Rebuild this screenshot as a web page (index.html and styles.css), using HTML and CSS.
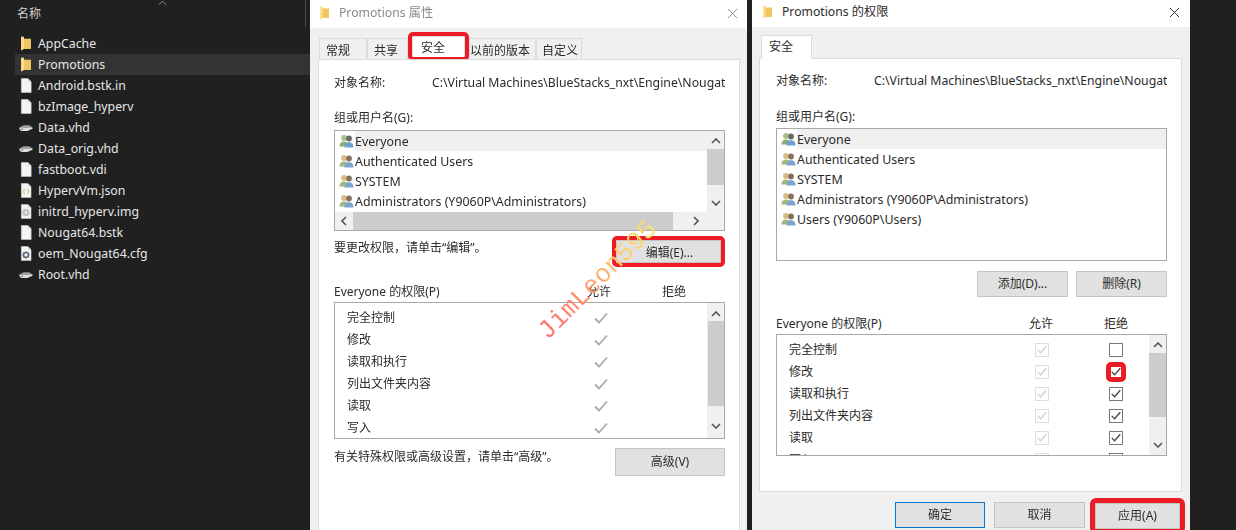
FILE: index.html
```html
<!DOCTYPE html>
<html lang="zh">
<head>
<meta charset="utf-8">
<title>Promotions 权限</title>
<link rel="stylesheet" href="styles.css">
</head>
<body>
<svg class="defs" width="0" height="0" aria-hidden="true">
  <symbol id="folder" viewBox="0 0 11 14">
    <path d="M1 .8h2.200L4 2.500h6v9.500H3.200L1 13.600z" fill="#f6cf6b"/>
    <path d="M1 .8h2.200L3.600 2.500v9.700L1 13.600z" fill="#fbe08e"/>
    <path d="M3.600 2.800H10v9.200H3.600z" fill="#f0c662"/>
  </symbol>
  <symbol id="file" viewBox="0 0 12 16">
    <path d="M1 .5h7l3.5 3.5v11.500H1z" fill="#f4f4f4" stroke="#cfcfcf" stroke-width=".6"/>
    <path d="M8 .5V4h3.500z" fill="#d8d8d8"/>
  </symbol>
  <symbol id="json" viewBox="0 0 12 16">
    <use href="#file"/>
    <path d="M4.700 6.200c-1.200 0-.8 1.400-.8 2.300 0 .4-.3.5-.6.5.3 0 .6.100.6.500 0 .9-.4 2.300.8 2.300M7.300 6.200c1.200 0 .8 1.400.8 2.300 0 .4.300.5.600.5-.3 0-.6.100-.6.500 0 .9.400 2.300-.8 2.300" fill="none" stroke="#c2b24c" stroke-width=".8"/>
  </symbol>
  <symbol id="disc" viewBox="0 0 12 16">
    <use href="#file"/>
    <circle cx="6" cy="9" r="4" fill="#c4c4c4"/>
    <circle cx="6" cy="9" r="1.200" fill="#eee"/>
  </symbol>
  <symbol id="gear" viewBox="0 0 12 16">
    <use href="#file"/>
    <circle cx="6" cy="9.500" r="2.600" fill="none" stroke="#5d6f80" stroke-width="1.700"/>
    <path d="M6 5.500v1.400M6 12v1.500M2 9.500h1.400M8.600 9.500H10M3.200 6.700l1 1M7.800 11.300l1 1M8.800 6.700l-1 1M4.200 11.300l-1 1" stroke="#5d6f80" stroke-width="1"/>
  </symbol>
  <symbol id="disk" viewBox="0 0 15 9">
    <path d="M.5 4.500 5 2.200h6L14.500 4.500 9 7H2z" fill="#9e9e9e"/>
    <path d="M.5 4.700 9 5l5.500-.5v1.400L9 8.300H2.500L.5 6.700z" fill="#dedede"/>
    <path d="M2 5.700h2.500v1H2z" fill="#666"/>
  </symbol>
  <symbol id="users" viewBox="0 0 15 14">
    <circle cx="5" cy="4" r="2.900" fill="#a9bf8c"/>
    <path d="M.5 12.500c0-3.500 1.800-5 4.500-5s4.500 1.500 4.500 5z" fill="#8eab73"/>
    <circle cx="10" cy="4.500" r="2.900" fill="#6b6a62"/>
    <path d="M5.500 13.500c0-3.800 1.900-5.300 4.500-5.300s4.500 1.500 4.500 5.300z" fill="#6fa0d2"/>
  </symbol>
  <symbol id="usersg" viewBox="0 0 15 14">
    <circle cx="5" cy="4" r="2.900" fill="#d8bd84"/>
    <path d="M.5 12.500c0-3.500 1.800-5 4.500-5s4.500 1.500 4.500 5z" fill="#9cb87d"/>
    <circle cx="10" cy="4.500" r="2.900" fill="#84705c"/>
    <path d="M5.500 13.500c0-3.800 1.900-5.300 4.500-5.300s4.500 1.500 4.500 5.300z" fill="#79a5d3"/>
  </symbol>
  <symbol id="up" viewBox="0 0 10 6"><path d="M1 5l4-4 4 4" fill="none" stroke="#555" stroke-width="1.600"/></symbol>
  <symbol id="down" viewBox="0 0 10 6"><path d="M1 1l4 4 4-4" fill="none" stroke="#555" stroke-width="1.600"/></symbol>
  <symbol id="left" viewBox="0 0 6 10"><path d="M5 1L1 5l4 4" fill="none" stroke="#555" stroke-width="1.600"/></symbol>
  <symbol id="right" viewBox="0 0 6 10"><path d="M1 1l4 4-4 4" fill="none" stroke="#555" stroke-width="1.600"/></symbol>
  <symbol id="tick" viewBox="0 0 14 12"><path d="M1 6.500l4 4L13 1.500" fill="none" stroke="currentColor" stroke-width="1.800"/></symbol>
  <symbol id="close" viewBox="0 0 12 12"><path d="M1 1l10 10M11 1L1 11" fill="none" stroke="currentColor" stroke-width="1"/></symbol>
</svg>

<section class="explorer">
  <header class="ex-head">
    <span>名称</span>
    <svg class="caret" viewBox="0 0 10 6"><path d="M1 5l4-4 4 4" fill="none" stroke="#9a9a9a" stroke-width="1"/></svg>
  </header>
  <ul class="ex-list">
    <li class="ex-row"><svg class="ex-ico"><use href="#folder"/></svg>AppCache</li>
    <li class="ex-row ex-sel"><svg class="ex-ico"><use href="#folder"/></svg>Promotions</li>
    <li class="ex-row"><svg class="ex-ico"><use href="#file"/></svg>Android.bstk.in</li>
    <li class="ex-row"><svg class="ex-ico"><use href="#file"/></svg>bzImage_hyperv</li>
    <li class="ex-row"><svg class="ex-ico"><use href="#disk"/></svg>Data.vhd</li>
    <li class="ex-row"><svg class="ex-ico"><use href="#disk"/></svg>Data_orig.vhd</li>
    <li class="ex-row"><svg class="ex-ico"><use href="#file"/></svg>fastboot.vdi</li>
    <li class="ex-row"><svg class="ex-ico"><use href="#json"/></svg>HypervVm.json</li>
    <li class="ex-row"><svg class="ex-ico"><use href="#disc"/></svg>initrd_hyperv.img</li>
    <li class="ex-row"><svg class="ex-ico"><use href="#file"/></svg>Nougat64.bstk</li>
    <li class="ex-row"><svg class="ex-ico"><use href="#gear"/></svg>oem_Nougat64.cfg</li>
    <li class="ex-row"><svg class="ex-ico"><use href="#disk"/></svg>Root.vhd</li>
  </ul>
</section>

<section class="dialog d1">
  <header class="title inactive">
    <svg class="t-ico"><use href="#folder"/></svg>
    <span class="t-text">Promotions 属性</span>
    <svg class="t-close"><use href="#close"/></svg>
  </header>
  <nav class="tabs">
    <span class="tab t-a">常规</span>
    <span class="tab t-b">共享</span>
    <span class="tab tab-on red">安全</span>
    <span class="tab t-c">以前的版本</span>
    <span class="tab t-d">自定义</span>
  </nav>
  <div class="panel">
    <div class="objrow"><span class="objlabel">对象名称:</span><span class="objpath">C:\Virtual Machines\BlueStacks_nxt\Engine\Nougat</span></div>
    <div class="label lab-g">组或用户名(G):</div>
    <div class="box groups g1">
      <div class="g-main">
        <ul class="g-rows">
          <li class="g-row g-sel"><svg class="u-ico"><use href="#users"/></svg><span class="g-name">Everyone</span></li>
          <li class="g-row"><svg class="u-ico"><use href="#usersg"/></svg><span class="g-name">Authenticated Users</span></li>
          <li class="g-row"><svg class="u-ico"><use href="#usersg"/></svg><span class="g-name">SYSTEM</span></li>
          <li class="g-row"><svg class="u-ico"><use href="#usersg"/></svg><span class="g-name">Administrators (Y9060P\Administrators)</span></li>
        </ul>
        <div class="vbar vb-g">
          <svg class="arrow"><use href="#up"/></svg>
          <div class="thumb"></div>
          <svg class="arrow"><use href="#down"/></svg>
        </div>
      </div>
      <div class="hbar">
        <svg class="arrow-h"><use href="#left"/></svg>
        <div class="hthumb"></div>
        <svg class="arrow-h"><use href="#right"/></svg>
      </div>
    </div>
    <div class="editrow">
      <span>要更改权限，请单击“编辑”。</span>
      <span class="btn btn-edit red">编辑(E)...</span>
    </div>
    <div class="permhead ph1"><span>Everyone 的权限(P)</span><span>允许</span><span></span><span>拒绝</span></div>
    <div class="box perms p1">
      <ul class="p-rows">
        <li class="p-row"><span>完全控制</span><svg class="tick"><use href="#tick"/></svg></li>
        <li class="p-row"><span>修改</span><svg class="tick"><use href="#tick"/></svg></li>
        <li class="p-row"><span>读取和执行</span><svg class="tick"><use href="#tick"/></svg></li>
        <li class="p-row"><span>列出文件夹内容</span><svg class="tick"><use href="#tick"/></svg></li>
        <li class="p-row"><span>读取</span><svg class="tick"><use href="#tick"/></svg></li>
        <li class="p-row"><span>写入</span><svg class="tick"><use href="#tick"/></svg></li>
      </ul>
      <div class="vbar vb-p1">
        <svg class="arrow"><use href="#up"/></svg>
        <div class="thumb"></div>
        <svg class="arrow"><use href="#down"/></svg>
      </div>
    </div>
    <div class="advrow">
      <span>有关特殊权限或高级设置，请单击“高级”。</span>
      <span class="btn btn-adv">高级(V)</span>
    </div>
  </div>
</section>

<section class="dialog d2">
  <header class="title">
    <svg class="t-ico"><use href="#folder"/></svg>
    <span class="t-text">Promotions 的权限</span>
    <svg class="t-close"><use href="#close"/></svg>
  </header>
  <nav class="tabs">
    <span class="tab tab-solo">安全</span>
  </nav>
  <div class="panel panel2">
    <div class="objrow"><span class="objlabel">对象名称:</span><span class="objpath">C:\Virtual Machines\BlueStacks_nxt\Engine\Nougat</span></div>
    <div class="label lab-g">组或用户名(G):</div>
    <div class="box groups g2">
      <ul class="g-rows">
        <li class="g-row g-sel"><svg class="u-ico"><use href="#users"/></svg><span class="g-name">Everyone</span></li>
        <li class="g-row"><svg class="u-ico"><use href="#usersg"/></svg><span class="g-name">Authenticated Users</span></li>
        <li class="g-row"><svg class="u-ico"><use href="#usersg"/></svg><span class="g-name">SYSTEM</span></li>
        <li class="g-row"><svg class="u-ico"><use href="#usersg"/></svg><span class="g-name">Administrators (Y9060P\Administrators)</span></li>
        <li class="g-row"><svg class="u-ico"><use href="#usersg"/></svg><span class="g-name">Users (Y9060P\Users)</span></li>
      </ul>
    </div>
    <div class="addrow">
      <span class="btn btn-wide">添加(D)...</span>
      <span class="btn btn-wide">删除(R)</span>
    </div>
    <div class="permhead ph2"><span>Everyone 的权限(P)</span><span>允许</span><span></span><span>拒绝</span></div>
    <div class="box perms p2">
      <ul class="p-rows">
        <li class="p-row"><span>完全控制</span><span class="cb cb-off"><svg class="cb-t"><use href="#tick"/></svg></span><span class="cb cb-deny"></span></li>
        <li class="p-row"><span>修改</span><span class="cb cb-off"><svg class="cb-t"><use href="#tick"/></svg></span><span class="cb cb-deny cb-red"><svg class="cb-t"><use href="#tick"/></svg></span></li>
        <li class="p-row"><span>读取和执行</span><span class="cb cb-off"><svg class="cb-t"><use href="#tick"/></svg></span><span class="cb cb-deny"><svg class="cb-t"><use href="#tick"/></svg></span></li>
        <li class="p-row"><span>列出文件夹内容</span><span class="cb cb-off"><svg class="cb-t"><use href="#tick"/></svg></span><span class="cb cb-deny"><svg class="cb-t"><use href="#tick"/></svg></span></li>
        <li class="p-row"><span>读取</span><span class="cb cb-off"><svg class="cb-t"><use href="#tick"/></svg></span><span class="cb cb-deny"><svg class="cb-t"><use href="#tick"/></svg></span></li>
        <li class="p-row"><span>写入</span><span class="cb cb-off"><svg class="cb-t"><use href="#tick"/></svg></span><span class="cb cb-deny"><svg class="cb-t"><use href="#tick"/></svg></span></li>
      </ul>
      <div class="vbar vb-p2">
        <svg class="arrow"><use href="#up"/></svg>
        <div class="thumb"></div>
        <svg class="arrow"><use href="#down"/></svg>
      </div>
    </div>
  </div>
  <footer class="actions">
    <span class="btn btn-act btn-default">确定</span>
    <span class="btn btn-act">取消</span>
    <span class="btn btn-act btn-apply red">应用(A)</span>
  </footer>
</section>

<div class="watermark">JimLeon595</div>
</body>
</html>
```
FILE: styles.css
```css
* { box-sizing: border-box; }
html, body { margin: 0; padding: 0; }
body {
  width: 1236px;
  height: 530px;
  overflow: hidden;
  position: relative;
  display: flex;
  align-items: flex-start;
  background: #202020;
  font-family: "Noto Sans", "Noto Sans CJK SC", sans-serif;
  font-size: 12px;
  line-height: 20px;
  color: #2b2b2b;
}
ul { list-style: none; margin: 0; padding: 0; }
.defs { position: absolute; }

/* explorer */
.explorer { width: 310px; flex: none; color: #e6e6e6; font-size: 12.300px; }
.ex-head {
  width: 306px;
  height: 27px;
  display: flex;
  padding-left: 17px;
  border-right: 1px solid #4a4a4a;
  font-size: 12px;
  color: #d0d0d0;
  line-height: 27px;
}
.caret { width: 9px; height: 6px; margin: 0 0 0 117px; }
.ex-list { padding: 6px 0 0 15px; }
.ex-row { height: 21px; display: flex; align-items: center; padding-left: 4px; }
.ex-sel { background: #333333; }
.ex-ico { width: 14px; height: 15px; margin-right: 5px; flex: none; }

/* dialogs */
.dialog { height: 530px; flex: none; background: #f0f0f0; display: flex; flex-direction: column; filter: blur(.3px); }
.d1 { width: 437px; }
.d2 { width: 438px; margin-left: 5px; }
.title {
  height: 28px;
  background: #fff;
  display: flex;
  align-items: center;
  padding: 0 9px 2px 9px;
  flex: none;
}
.d2 .title { height: 27px; padding: 0 10px 3px; }
.inactive { color: #8a8a8a; }
.t-ico { width: 11px; height: 14px; flex: none; margin-right: 9px; }
.t-text { flex: 1; font-size: 12.200px; }
.t-close { width: 11px; height: 11px; color: #8a8a8a; }
.d2 .t-close { color: #222; }

.tabs { height: 31px; display: flex; align-items: flex-end; padding-left: 9px; flex: none; }
.tab {
  height: 21px;
  background: #f0f0f0;
  border: 1px solid #dcdcdc;
  border-bottom: 0;
  line-height: 23px;
  flex: none;
}
.t-a { width: 48px; padding-left: 6px; }
.t-b { width: 41px; padding-left: 6px; }
.t-c { width: 67px; padding-left: 0; }
.t-d { width: 46px; padding-left: 5px; }
.tab-on { width: 53px; margin: 0 4px; align-self: flex-start; margin-top: 8px; background: #fff; padding-left: 8px; line-height: 21px; }
.tab-solo { width: 51px; height: 24px; background: #fff; padding-left: 7px; margin-bottom: -1px; position: relative; line-height: 21px; }

.red { outline: 4px solid #ed1c24; outline-offset: 0; border-radius: 1px; }

.panel {
  width: 422px;
  flex: 1;
  margin-left: 8px;
  background: #fff;
  border: 1px solid #dcdcdc;
  border-bottom: 0;
  padding: 13px 14px 0 15px;
}
.panel2 {
  width: 423px;
  height: 434px;
  flex: none;
  margin-left: 7px;
  border-bottom: 1px solid #dcdcdc;
  padding-left: 16px;
  padding-top: 12px;
}
.objrow { display: flex; height: 20px; }
.objlabel { width: 98px; flex: none; }
.objpath { white-space: nowrap; overflow: hidden; width: 293px; font-size: 12.250px; }
.label { height: 20px; }
.lab-g { margin-top: 15px; }
.panel2 .lab-g { margin-top: 16px; }

.box { border: 1px solid #a8a8a8; background: #fff; width: 391px; }
.groups { margin-top: 2px; }
.g1 { height: 101px; }
.g2 { height: 133px; margin-top: 1px; }
.g-main { display: flex; height: 81px; }
.g-rows { flex: 1; }
.g-row { display: flex; height: 20px; align-items: center; padding-left: 4px; font-size: 12.400px; }
.u-ico { width: 15px; height: 14px; flex: none; margin-right: 1px; }
.g-name { flex: 1; line-height: 19px; padding-top: 1px; }
.g-sel .g-name { background: #f0f0f0; }

.vbar { width: 17px; flex: none; background: #f0f0f0; display: flex; flex-direction: column; align-items: center; }
.arrow { width: 10px; height: 6px; flex: none; }
.thumb { width: 100%; background: #cdcdcd; flex: none; }
.vb-g { padding-top: 7px; }
.vb-g .thumb { height: 36px; margin: 5px 0 15px; }
.hbar { height: 18px; background: #f0f0f0; display: flex; align-items: center; padding-left: 6px; }
.arrow-h { width: 6px; height: 10px; flex: none; }
.hthumb { width: 320px; height: 100%; background: #cdcdcd; margin: 0 20px 0 6px; flex: none; }

.editrow { display: flex; justify-content: space-between; margin-top: 9px; height: 23px; align-items: flex-start; line-height: 16px; padding-right: 4px; }
.btn {
  display: flex;
  align-items: center;
  justify-content: center;
  background: #e1e1e1;
  border: 1px solid #c4c4c4;
  flex: none;
}
.btn-edit { width: 105px; height: 23px; padding: 3px 0 0 2px; }

.permhead { display: grid; grid-template-columns: 253px 24px 51px 24px; height: 20px; white-space: nowrap; }
.ph1 { margin-top: 19px; }
.ph2 { margin-top: 17px; }

.perms { display: flex; overflow: hidden; }
.p1 { height: 137px; }
.p2 { height: 122px; }
.p-rows { flex: 1; padding: 4px 0 0 12px; }
.p-row { display: grid; height: 22px; align-items: center; }
.p1 .p-row { grid-template-columns: 244px 20px; }
.p2 .p-row { grid-template-columns: 246px 14px 60px 14px; }
.tick { width: 14px; height: 12px; color: #a9a9a9; margin-left: 3px; }

.vb-p1 { padding-top: 8px; }
.vb-p1 .thumb { height: 85px; margin: 4px 0 17px; width: 16px; }
.vb-p2 { padding-top: 7px; }
.vb-p2 .thumb { height: 64px; margin: 5px 0 25px; }

.cb { width: 14px; height: 14px; margin-top: -1px; border: 1px solid #777; display: flex; align-items: center; justify-content: center; background: #fff; justify-self: center; color: #444; }
.cb-off { border-color: #dedede; color: #cfcfcf; }
.cb-deny { grid-column: 4; }
.cb-red { outline: 5px solid #ed1c24; outline-offset: -2px; border-radius: 2px; }
.cb-t { width: 10px; height: 9px; }

.advrow { display: flex; justify-content: space-between; margin-top: 9px; line-height: 18px; align-items: flex-start; }
.btn-adv { width: 110px; height: 28px; }

.addrow { display: flex; justify-content: flex-end; gap: 8px; margin-top: 10px; width: 391px; }
.btn-wide { width: 91px; height: 26px; }

.actions { display: flex; gap: 9px; padding: 10px 0 0 143px; }
.btn-act { width: 91px; height: 26px; }
.btn-default { width: 90px; border-color: #0078d7; }
.btn-apply { width: 85px; margin: 1px 0 0 1px; outline-width: 5px; }

/* watermark */
.watermark {
  position: absolute;
  left: 519px;
  top: 264px;
  width: 160px;
  font-family: "Liberation Mono", monospace;
  font-size: 26px;
  line-height: 30px;
  white-space: nowrap;
  transform: rotate(-45deg);
  background: linear-gradient(90deg, #ff6f6f 0%, #ff8f6a 35%, #ffc66a 65%, #f4e56a 100%);
  -webkit-background-clip: text;
  background-clip: text;
  color: transparent;
}
```
